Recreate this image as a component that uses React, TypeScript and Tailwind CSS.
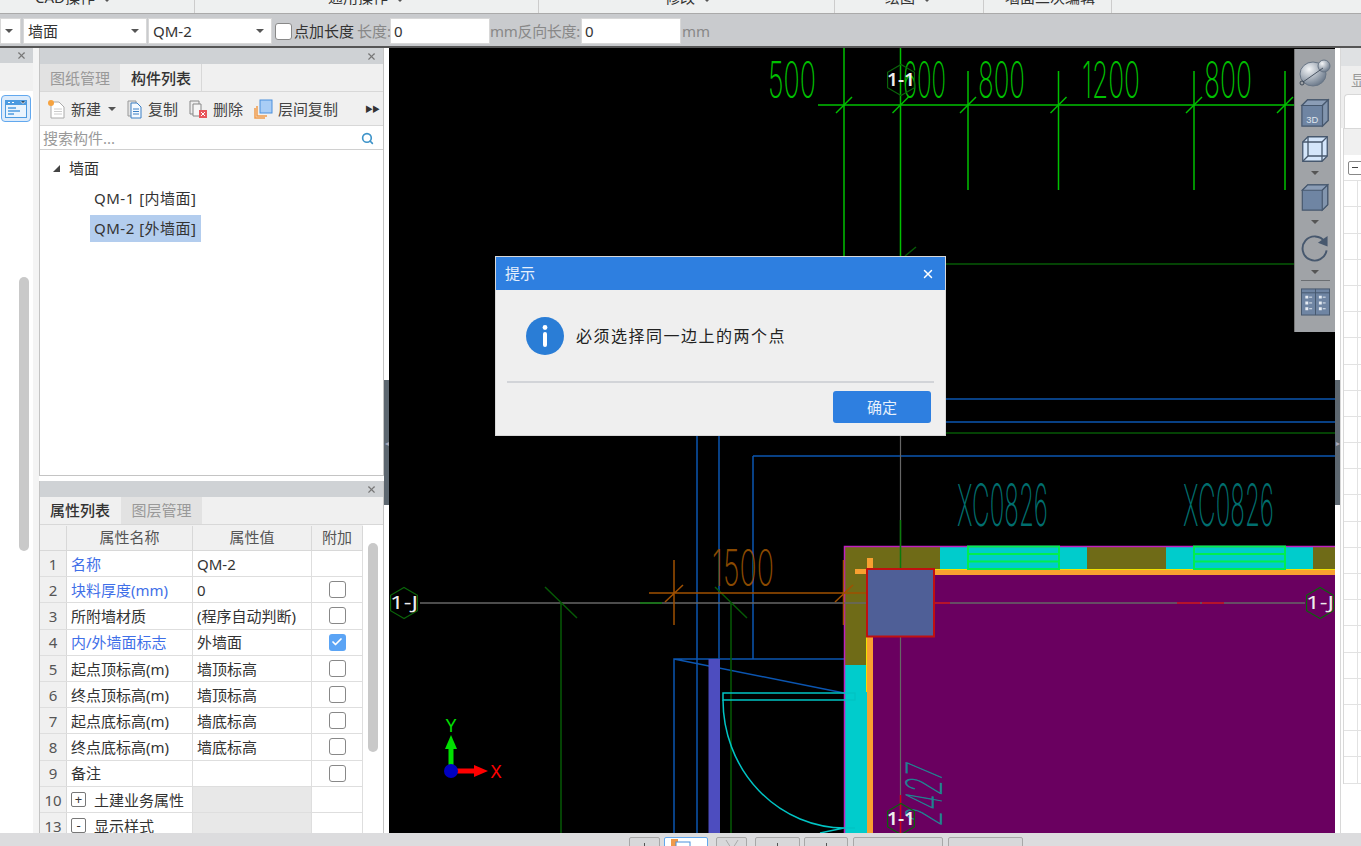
import type { ReactNode } from 'react';
import { Check, Search, X } from 'lucide-react';

type PropRow = {
	no: number;
	name: string;
	value: string;
	blue?: boolean;
	box?: 'on' | 'off';
	group?: '+' | '-';
};

const rows: PropRow[] = [
	{ no: 1, name: '名称', value: 'QM-2', blue: true },
	{ no: 2, name: '块料厚度(mm)', value: '0', blue: true, box: 'off' },
	{ no: 3, name: '所附墙材质', value: '(程序自动判断)', box: 'off' },
	{ no: 4, name: '内/外墙面标志', value: '外墙面', blue: true, box: 'on' },
	{ no: 5, name: '起点顶标高(m)', value: '墙顶标高', box: 'off' },
	{ no: 6, name: '终点顶标高(m)', value: '墙顶标高', box: 'off' },
	{ no: 7, name: '起点底标高(m)', value: '墙底标高', box: 'off' },
	{ no: 8, name: '终点底标高(m)', value: '墙底标高', box: 'off' },
	{ no: 9, name: '备注', value: '', box: 'off' },
	{ no: 10, name: '土建业务属性', value: '', group: '+' },
	{ no: 13, name: '显示样式', value: '', group: '-' },
];

const Caret = () => (
	<span className="block h-0 w-0 shrink-0 border-x-[4px] border-t-[4px] border-x-transparent border-t-[#555]" />
);

const Select = ({ label, width }: { label: string; width: string }) => (
	<div className={`flex h-[26px] shrink-0 items-center justify-between border border-[#d8d8d8] bg-white pl-[4px] pr-[7px] text-[15px] text-[#333] ${width}`}>
		<span>{label}</span>
		<Caret />
	</div>
);

const NewIcon = () => (
	<svg width="20" height="20" viewBox="0 0 20 20">
		<path d="M4 3h8l5 5v11H4z" fill="#fff" stroke="#aaa" />
		<path d="M7 10h8M7 12.5h8M7 15h8" stroke="#ccc" />
		<circle cx="4" cy="4" r="3" fill="#f6a340" />
	</svg>
);

const CopyIcon = () => (
	<svg width="18" height="20" viewBox="0 0 18 20">
		<path d="M2 2h8v15H2z" fill="#e4e4e4" stroke="#999" />
		<path d="M5 4h6l4 4v11H5z" fill="#f4f9ff" stroke="#3b7fc4" />
		<path d="M7 10h6M7 12.5h6M7 15h6" stroke="#3b7fc4" />
	</svg>
);

const DeleteIcon = () => (
	<svg width="20" height="20" viewBox="0 0 20 20">
		<path d="M1 2h9v13H1z" fill="#eee" stroke="#888" />
		<path d="M4 5h8v12H4z" fill="#f6f6f6" stroke="#888" />
		<rect x="10" y="11" width="8" height="8" fill="#e8555a" />
		<path d="M12 13l4 4M16 13l-4 4" stroke="#fff" />
	</svg>
);

const LayerCopyIcon = () => (
	<svg width="20" height="20" viewBox="0 0 20 20">
		<path d="M1 9v10h10" fill="none" stroke="#f09a4a" strokeWidth="1.5" />
		<path d="M3 7v10h10" fill="none" stroke="#f09a4a" strokeWidth="1.5" />
		<rect x="6" y="1" width="12" height="13" fill="#a9cdf5" stroke="#4a8fdc" />
	</svg>
);

const LeftStrip = () => (
	<div className="flex w-[33px] shrink-0 flex-col bg-white">
		<div className="flex h-[15px] items-center justify-end bg-[#cfd2d5] pr-[6px]">
			<X size={11} strokeWidth={2.5} className="text-[#777]" />
		</div>
		<div className="h-[28px] bg-[#f0f0f0]" />
		<div className="ml-[1px] mt-[4px] flex h-[27px] w-[30px] items-center justify-center rounded-[4px] border border-[#62a8ee] bg-[#dcebfb]">
			<svg width="22" height="18" viewBox="0 0 22 18">
				<rect width="22" height="18" fill="#4d9be0" />
				<rect x="1" y="5" width="20" height="12" fill="#eaf4fd" />
				<path d="M3 8h8M3 11h12M3 14h6" stroke="#4d9be0" strokeWidth="1.5" />
				<path d="M3 2.5h2M7 2.5h2M16 1.5l2 2 2-2" stroke="#fff" />
			</svg>
		</div>
		<div className="ml-[19px] mt-[155px] h-[274px] w-[10px] rounded-full bg-[#c9c9c9]" />
	</div>
);

const PanelHeader = () => (
	<div className="flex h-[16px] shrink-0 items-center justify-end bg-[#cfd2d5] pr-[6px]">
		<X size={11} strokeWidth={2.5} className="text-[#777]" />
	</div>
);

const ToolButton = ({ icon, label }: { icon: ReactNode; label: string }) => (
	<div className="flex items-center gap-[4px] text-[15px] text-[#444]">
		{icon}
		<span className="pt-[2px]">{label}</span>
	</div>
);

const ComponentPanel = () => (
	<div className="flex h-[428px] shrink-0 flex-col border-x border-b border-[#c4c4c4] bg-white">
		<PanelHeader />
		<div className="flex h-[28px] shrink-0 items-end border-b border-[#d8d8d8] bg-[#f0f0f0]">
			<div className="flex h-[27px] w-[80px] items-center justify-center bg-[#e2e2e2] pt-[1px] text-[15px] text-[#999]">图纸管理</div>
			<div className="ml-[1px] flex h-[27px] w-[81px] items-center justify-center border-r border-[#d8d8d8] bg-[#f0f0f0] pt-[1px] text-[15px] font-medium text-[#333]">构件列表</div>
		</div>
		<div className="flex h-[34px] shrink-0 items-center border-b border-[#d8d8d8] bg-[#f0f0f0] pl-[7px] pr-[4px]">
			<ToolButton icon={<NewIcon />} label="新建" />
			<span className="ml-[7px] mr-[10px]"><Caret /></span>
			<ToolButton icon={<CopyIcon />} label="复制" />
			<span className="w-[11px]" />
			<ToolButton icon={<DeleteIcon />} label="删除" />
			<span className="w-[11px]" />
			<ToolButton icon={<LayerCopyIcon />} label="层间复制" />
			<span className="ml-auto text-[8px] tracking-[-1px] text-[#333]">▶▶</span>
		</div>
		<div className="flex h-[24px] shrink-0 items-center justify-between border-b border-[#d0d0d0] pl-[3px] pr-[9px] pt-[2px] text-[15px] text-[#999]">
			<span>搜索构件...</span>
			<Search size={13} strokeWidth={3} className="text-[#3d93c9]" />
		</div>
		<div className="flex flex-col pt-[3px] text-[15px] tracking-[0.5px] text-[#333]">
			<div className="flex h-[30px] items-center pl-[13px]">
				<span className="h-0 w-0 border-b-[7px] border-l-[7px] border-b-[#444] border-l-transparent" />
				<span className="ml-[9px] tracking-normal">墙面</span>
			</div>
			<div className="flex h-[30px] items-center pl-[54px]">QM-1 [内墙面]</div>
			<div className="ml-[50px] mt-[2px] flex h-[27px] w-[111px] items-center bg-[#b3cdee] pl-[4px]">QM-2 [外墙面]</div>
		</div>
	</div>
);

const CheckBox = ({ on }: { on: boolean }) =>
	on ? (
		<span className="flex h-[17px] w-[17px] items-center justify-center rounded-[3px] bg-[#5ba4f5]">
			<Check size={12} strokeWidth={3.5} className="text-white" />
		</span>
	) : (
		<span className="h-[17px] w-[17px] rounded-[3px] border border-[#888] bg-white" />
	);

const PropertyPanel = () => (
	<div className="mt-[5px] flex min-h-0 flex-1 flex-col overflow-hidden border-x border-[#c4c4c4] bg-white">
		<PanelHeader />
		<div className="flex h-[28px] shrink-0 items-end border-b border-[#d8d8d8] bg-[#f0f0f0]">
			<div className="flex h-[27px] w-[80px] items-center justify-center bg-[#f0f0f0] text-[15px] font-medium text-[#333]">属性列表</div>
			<div className="ml-[1px] flex h-[27px] w-[81px] items-center justify-center bg-[#e2e2e2] text-[15px] text-[#999]">图层管理</div>
		</div>
		<div className="flex min-h-0 flex-1">
			<div className="flex w-[323px] flex-col text-[15px] text-[#333]">
				<div className="flex h-[26px] shrink-0 border-b border-[#d8d8d8] bg-[#f0f0f0] pt-[1px] text-center text-[#555]">
					<div className="w-[27px] border-r border-[#d8d8d8]" />
					<div className="w-[126px] border-r border-[#d8d8d8]">属性名称</div>
					<div className="w-[119px] border-r border-[#d8d8d8]">属性值</div>
					<div className="w-[51px] border-r border-[#d8d8d8]">附加</div>
				</div>
				{rows.map((r) => (
					<div key={r.no} className="flex h-[26.2px] shrink-0 items-stretch border-b border-[#dedede]">
						<div className="flex w-[27px] items-center justify-center border-r border-[#d8d8d8] bg-[#f0f0f0] pt-[1px] text-[#555]">{r.no}</div>
						<div className={`flex w-[126px] items-center whitespace-nowrap border-r border-[#dedede] pl-[4px] pt-[1px] ${r.blue ? 'text-[#3f6fe8]' : ''}`}>
							{r.group ? (
								<>
									<span className="mr-[8px] flex h-[15px] w-[15px] items-center justify-center rounded-[2px] border border-[#777] text-[13px] leading-none">{r.group}</span>
									{r.name}
								</>
							) : (
								r.name
							)}
						</div>
						<div className={`flex w-[119px] items-center whitespace-nowrap border-r border-[#dedede] pl-[4px] pt-[1px] ${r.group ? 'bg-[#e8e8e8]' : ''}`}>{r.value}</div>
						<div className="flex w-[51px] items-center justify-center border-r border-[#dedede]">
							{r.box ? <CheckBox on={r.box === 'on'} /> : null}
						</div>
					</div>
				))}
			</div>
			<div className="ml-[5px] mt-[18px] h-[209px] w-[10px] rounded-full bg-[#c9c9c9]" />
		</div>
	</div>
);

const Splitter = ({ width, arrow }: { width: string; arrow: string }) => (
	<div className={`flex shrink-0 flex-col bg-white pt-[332px] ${width}`}>
		<div className="flex h-[125px] items-center justify-center bg-[#5d6770] text-[8px] text-[#aab]">{arrow}</div>
	</div>
);

const Cad = ({ x, y, w, size, fill, children }: { x: number; y: number; w: number; size: number; fill: string; children: string }) => (
	<text x={x} y={y} fontFamily="Inter, sans-serif" fontWeight={200} fontSize={size} fill={fill} textLength={w} lengthAdjust="spacingAndGlyphs">
		{children}
	</text>
);

const hexPoints = (cx: number, cy: number, r: number) =>
	[0, 1, 2, 3, 4, 5]
		.map((i) => {
			const a = (Math.PI / 3) * i + Math.PI / 2;
			return `${cx + r * Math.cos(a)},${cy + r * Math.sin(a)}`;
		})
		.join(' ');

const Axis = ({ cx, cy, label, w, weight }: { cx: number; cy: number; label: string; w: number; weight: number }) => (
	<g>
		<polygon points={hexPoints(cx, cy, 15.5)} fill="none" stroke="#0a650a" strokeWidth="1.2" />
		<text x={cx} y={cy + 6} textAnchor="middle" fontFamily="Noto Sans, sans-serif" fontSize="18" fontWeight={weight} fill="#eee" textLength={w} lengthAdjust="spacingAndGlyphs">
			{label}
		</text>
	</g>
);

const greenX = [844, 900.5, 968, 1058.5, 1194, 1285];
const windows = [968, 1194];

// drawing on the canvas, in page coordinates
const Drawing = () => (
	<svg className="h-full w-full" viewBox="389 48 946 785">
		{/* blue lines */}
		<g stroke="#0b55b0" strokeWidth="1.5" fill="none">
			<path d="M753 399H1335M753 422H1335M753 456H1335M753 456V659M697 430V833M719 430V659" />
			<path d="M674 833V659H844M674 659L844 693" />
		</g>
		<rect x="708.5" y="659" width="11.5" height="174" fill="#4d4dbf" />
		<path d="M753 433H1335" stroke="#065906" strokeWidth="1.5" />

		{/* upper dimensions */}
		<g stroke="#00c000" strokeWidth="1.5" fill="none">
			<path d="M844 48V260M900.5 48V260M968 71V190M1058.5 71V190M1194 71V190M1285 71V190M818 105H1294" />
			{greenX.map((x) => (
				<path key={x} d={`M${x - 8} ${113}L${x + 8} ${97}`} />
			))}
		</g>
		<Cad x={768} y={98} w={48} size={50} fill="#00c000">500</Cad>
		<Cad x={903} y={98} w={43} size={50} fill="#00c000">600</Cad>
		<Cad x={978} y={98} w={47} size={50} fill="#00c000">800</Cad>
		<Cad x={1082} y={98} w={58} size={50} fill="#00c000">1200</Cad>
		<Cad x={1204} y={98} w={48} size={50} fill="#00c000">800</Cad>
		<path d="M946 264H1294M905 256L916 247" stroke="#065906" strokeWidth="1.5" />

		{/* wall and room fills */}
		<rect x="845" y="547" width="490" height="286" fill="#6a0060" />
		<rect x="845" y="547" width="22" height="118" fill="#6f6b17" />
		<rect x="845" y="665" width="22" height="168" fill="#00cccc" />
		<rect x="845" y="547" width="95" height="22" fill="#6f6b17" />
		<rect x="940" y="547" width="147" height="22" fill="#00cccc" />
		<rect x="1087" y="547" width="79" height="22" fill="#6f6b17" />
		<rect x="1166" y="547" width="147" height="22" fill="#00cccc" />
		<rect x="1313" y="547" width="22" height="22" fill="#6f6b17" />
		<rect x="867" y="569" width="468" height="6" fill="#f8a030" />
		<path d="M867 569.5H1335" stroke="#f0e000" />
		<rect x="867" y="636" width="6" height="197" fill="#f8a030" />
		<path d="M866.5 636V692" stroke="#f0e000" />
		<path d="M867 558h6v11h-6zM855 569h12v5h-12z" fill="#f8a030" />
		<path d="M844.5 833V546.5H1335" fill="none" stroke="#c020c0" strokeWidth="1.5" />
		{windows.map((x) => (
			<g key={x} fill="none" stroke="#00ee50" strokeWidth="2">
				<rect x={x} y="546.5" width="91" height="22.5" />
				<path d={`M${x} 554H${x + 91}M${x} 561.5H${x + 91}`} />
			</g>
		))}

		{/* axis lines */}
		<path d="M420 603H1305" stroke="#666" strokeWidth="1.5" />
		<path d="M640 603H662" stroke="#0b7a0b" strokeWidth="1.5" />
		<path d="M900.5 436V833" stroke="#666" strokeWidth="1.2" />
		<path d="M900.5 520V569" stroke="#0b7a0b" strokeWidth="1.5" />
		<path d="M934 603H950M1177 603H1200M1202 603H1224M900.5 795V833" stroke="#d00018" strokeWidth="1.5" />
		<path d="M545 587L577 618M561 603V833M715 587L747 618M731 603V833" stroke="#065906" strokeWidth="1.5" fill="none" />

		{/* orange dimension */}
		<g stroke="#a05000" strokeWidth="1.5" fill="none">
			<path d="M649 593H869M674 560V625M665 602L683 585M843.5 560V625M835 602L853 585" />
		</g>
		<Cad x={712} y={586} w={62} size={50} fill="#8a4a00">1500</Cad>

		{/* column */}
		<rect x="867" y="569" width="67" height="67.5" fill="#4f5f97" stroke="#c01010" strokeWidth="2" />

		{/* door */}
		<g stroke="#00c4c4" fill="none" strokeWidth="1.5">
			<path d="M723 693H855V700H723Z" />
			<path d="M723 700A122 128 0 0 0 845 828H855M820 833L844 828" />
		</g>

		<Cad x={957} y={526} w={91} size={58} fill="#006e6e">XC0826</Cad>
		<Cad x={1183} y={526} w={91} size={58} fill="#006e6e">XC0826</Cad>
		<g transform="translate(942 827) rotate(-90) skewX(-10)">
			<Cad x={0} y={0} w={60} size={50} fill="#1f8090">2427</Cad>
		</g>

		<Axis cx={901} cy={80} label="1-1" w={28} weight={600} />
		<Axis cx={901} cy={819} label="1-1" w={28} weight={600} />
		<Axis cx={404} cy={603} label="1-J" w={28} weight={400} />
		<Axis cx={1320} cy={603} label="1-J" w={28} weight={400} />

		{/* origin marker */}
		<path d="M451 771V748" stroke="#00e000" strokeWidth="5" />
		<polygon points="451,735 445,749 457,749" fill="#00e000" />
		<path d="M451 771H475" stroke="#ff0000" strokeWidth="5" />
		<polygon points="488,771 474,765 474,777" fill="#ff0000" />
		<circle cx="451" cy="771" r="7" fill="#0000c0" />
		<text x="451" y="732" textAnchor="middle" fontFamily="Inter, sans-serif" fontSize="17" fill="#00e000">Y</text>
		<text x="496" y="778" textAnchor="middle" fontFamily="Inter, sans-serif" fontSize="17" fill="#ff0000">X</text>
	</svg>
);

const CubeFaces = ({ fill }: { fill: string }) => (
	<>
		<path d="M2 8l6-6h22v22l-6 6H2z" fill={fill} stroke="#47586e" strokeWidth="1.3" />
		<path d="M2 8l6-6h22l-6 6z" fill="#8b9db6" stroke="#47586e" strokeWidth="1.3" />
		<path d="M24 8l6-6v22l-6 6z" fill="#8295ae" stroke="#47586e" strokeWidth="1.3" />
	</>
);

const ViewTool = () => (
	<div className="absolute right-0 top-[1px] flex h-[283px] w-[41px] flex-col items-center border-l border-[#777] bg-[#a0a3a7] pt-[6px]">
		<svg width="32" height="33" viewBox="0 0 32 33" className="shrink-0">
			<defs>
				<radialGradient id="ball" cx="0.35" cy="0.3" r="0.8">
					<stop offset="0" stopColor="#f4f6f8" />
					<stop offset="1" stopColor="#5e6d80" />
				</radialGradient>
			</defs>
			<ellipse cx="14" cy="19" rx="13" ry="12" fill="url(#ball)" stroke="#687585" />
			<circle cx="25" cy="11" r="6" fill="url(#ball)" stroke="#687585" />
			<path d="M4 27L24 13" stroke="#4a5564" />
			<circle cx="3" cy="28" r="2" fill="none" stroke="#3e4a58" />
		</svg>
		<svg width="30" height="30" viewBox="0 0 32 32" className="mt-[10px] shrink-0">
			<CubeFaces fill="#6f85a3" />
			<text x="13" y="27" textAnchor="middle" fontFamily="Liberation Sans, sans-serif" fontSize="10" fill="#dfe6ee">3D</text>
		</svg>
		<svg width="30" height="28" viewBox="0 0 32 32" className="mt-[7px] shrink-0">
			<path d="M2 8l6-6h22v22l-6 6H2z" fill="#d4e6fb" stroke="#47586e" strokeWidth="1.5" />
			<path d="M2 8h22v22M24 8l6-6M8 2v22H30M8 24l-6 6" fill="none" stroke="#47586e" strokeWidth="1.5" />
		</svg>
		<span className="mt-[8px]"><Caret /></span>
		<svg width="30" height="29" viewBox="0 0 32 32" className="mt-[8px] shrink-0">
			<CubeFaces fill="#6f85a3" />
		</svg>
		<span className="mt-[8px]"><Caret /></span>
		<svg width="30" height="29" viewBox="0 0 30 30" className="mt-[9px] shrink-0">
			<path d="M25 9A12.5 12.5 0 1 0 27 18" fill="none" stroke="#47586e" strokeWidth="2" />
			<polygon points="28,3 28,14 18,10" fill="#47586e" />
		</svg>
		<span className="mt-[8px]"><Caret /></span>
		<div className="mt-[6px] h-[1px] w-[29px] shrink-0 bg-[#6b6e72]" />
		<svg width="31" height="29" viewBox="0 0 31 30" className="mt-[6px] shrink-0">
			<rect x="1" y="2" width="29" height="27" fill="#6f85a3" stroke="#47586e" />
			<path d="M15.5 2V29M1 6H30" stroke="#47586e" />
			<path d="M5 9h3v3H5zM5 15h3v3H5zM5 21h3v3H5zM19 9h3v3h-3zM19 15h3v3h-3zM19 21h3v3h-3z" fill="#e6ecf3" />
			<path d="M9 10.5h3M9 16.5h3M9 22.5h3M23 10.5h3M23 16.5h3M23 22.5h3" stroke="#e6ecf3" />
		</svg>
	</div>
);

const Dialog = () => (
	<div className="absolute left-[106px] top-[208px] flex h-[180px] w-[451px] flex-col border border-[#d8d8d8] bg-[#efefef]">
		<div className="flex h-[33px] shrink-0 items-center justify-between bg-[#2e7fe0] pl-[9px] pr-[10px] text-[15px] text-[#e6f0fc]">
			<span>提示</span>
			<X size={14} strokeWidth={2.5} className="text-white" />
		</div>
		<div className="mx-[11px] flex h-[93px] shrink-0 items-center border-b-2 border-[#d2d4d8] pl-[19px]">
			<svg width="38" height="38" viewBox="0 0 38 38" className="shrink-0">
				<circle cx="19" cy="19" r="19" fill="#2a7dd6" />
				<circle cx="19" cy="10.5" r="2.4" fill="#fff" />
				<rect x="17" y="15" width="4" height="15" rx="2" fill="#fff" />
			</svg>
			<span className="ml-[12px] text-[16px] tracking-[1.5px] text-[#222]">必须选择同一边上的两个点</span>
		</div>
		<div className="mr-[14px] mt-[8px] flex h-[32px] w-[98px] items-center justify-center self-end rounded-[3px] bg-[#2e7fe0] text-[15px] text-[#e6f0fc]">确定</div>
	</div>
);

const gridBoxes = [1, 4, 8, 17];

const RightPanel = () => (
	<div className="flex flex-1 flex-col overflow-hidden border-l border-[#d8d8d8] bg-white">
		<div className="h-[18px] shrink-0 bg-[#dfe1e3]" />
		<div className="flex h-[28px] shrink-0 items-center bg-[#eeeeee] pl-[10px] text-[15px] text-[#999]">显</div>
		<div className="flex h-[34px] shrink-0 items-end bg-[#eeeeee]">
			<div className="ml-[3px] h-[34px] flex-1 rounded-tl-[4px] border-l border-t border-[#d8d8d8] bg-white" />
		</div>
		<div className="ml-[2px] flex flex-col border-l border-t border-[#d8d8d8]">
			<div className="h-[26px] bg-[#f0f0f0]" />
			{[...Array(24)].map((_, i) => (
				<div key={i} className="flex h-[26.2px] items-center border-b border-[#e2e2e2] pl-[13px]">
					{i === 0 ? (
						<span className="-ml-[9px] flex h-[14px] w-[20px] shrink-0 items-center rounded-[2px] border border-[#888] bg-white pl-[3px]">
							<span className="h-[1px] w-[6px] bg-[#444]" />
						</span>
					) : (
						<div className="flex h-full items-center border-l border-[#e2e2e2] pl-[3px]">
							{gridBoxes.includes(i) ? <span className="h-[14px] w-[10px] shrink-0 border border-[#999] bg-[#eee]" /> : null}
						</div>
					)}
				</div>
			))}
		</div>
	</div>
);

const BottomButton = ({ width, active, children }: { width: string; active?: boolean; children?: ReactNode }) => (
	<div className={`flex h-[20px] shrink-0 justify-center rounded-t-[2px] border ${active ? 'border-[#62a8ee] bg-white' : 'border-[#a8a8a8] bg-[#d8d8da]'} ${width}`}>
		{children}
	</div>
);

const Stub = () => <span className="mt-[5px] h-[6px] w-[1px] bg-[#555]" />;

const RibbonGroup = ({ label, width, left }: { label: string; width: string; left: string }) => (
	<div className={`flex h-full shrink-0 items-start border-r border-[#ccc] ${width} ${left}`}>
		<span className="-mt-[13px] whitespace-nowrap">{label}</span>
		<span className="ml-[8px] -mt-[2px]"><Caret /></span>
	</div>
);

const App = () => (
	<div className="flex h-[846px] w-[1361px] flex-col overflow-hidden bg-white font-['Noto_Sans','Noto_Sans_CJK_SC',sans-serif]">
		<div className="flex h-[14px] shrink-0 overflow-hidden border-b border-[#aaa] bg-[#eef0f0] text-[15px] leading-[20px] text-[#333]">
			<RibbonGroup label="CAD操作" width="w-[195px]" left="pl-[35px]" />
			<RibbonGroup label="通用操作" width="w-[344px]" left="pl-[133px]" />
			<RibbonGroup label="修改" width="w-[296px]" left="pl-[126px]" />
			<RibbonGroup label="绘图" width="w-[149px]" left="pl-[50px]" />
			<div className="flex h-full w-[128px] shrink-0 items-start border-r border-[#ccc] pl-[21px]">
				<span className="-mt-[13px] whitespace-nowrap">墙面二次编辑</span>
			</div>
		</div>
		<div className="flex h-[34px] shrink-0 items-center border-b-2 border-[#555] bg-[#c9cbce] pt-[2px] text-[15px] text-[#333]">
			<Select label="" width="w-[21px]" />
			<span className="ml-[2px]"><Select label="墙面" width="w-[124px]" /></span>
			<span className="ml-[1px]"><Select label="QM-2" width="w-[124px]" /></span>
			<span className="ml-[3px] h-[17px] w-[17px] shrink-0 rounded-[3px] border border-[#888] bg-white" />
			<span className="ml-[2px] w-[61px] shrink-0 whitespace-nowrap">点加长度</span>
			<span className="ml-[2px] w-[33px] shrink-0 whitespace-nowrap text-[#888]">长度:</span>
			<div className="flex h-[26px] w-[100px] shrink-0 items-center border border-[#d8d8d8] bg-white pl-[3px]">0</div>
			<span className="w-[91px] shrink-0 whitespace-nowrap tracking-[-0.3px] text-[#888]">mm反向长度:</span>
			<div className="flex h-[26px] w-[100px] shrink-0 items-center border border-[#d8d8d8] bg-white pl-[3px]">0</div>
			<span className="ml-[1px] text-[#888]">mm</span>
		</div>
		<div className="flex min-h-0 flex-1">
			<LeftStrip />
			<div className="w-[6px] shrink-0 bg-[#f4f4f4]" />
			<div className="flex w-[345px] shrink-0 flex-col">
				<ComponentPanel />
				<PropertyPanel />
			</div>
			<Splitter width="w-[5px]" arrow="◂" />
			<div className="relative w-[946px] shrink-0 overflow-hidden bg-black">
				<Drawing />
				<Dialog />
				<ViewTool />
			</div>
			<Splitter width="w-[5px]" arrow="▸" />
			<RightPanel />
		</div>
		<div className="flex h-[13px] shrink-0 items-start overflow-hidden bg-[#dcdcde] pt-[4px]">
			<div className="ml-[629px]"><BottomButton width="w-[31px]"><Stub /></BottomButton></div>
			<div className="ml-[4px]">
				<BottomButton width="w-[44px]" active>
					<svg width="30" height="10" viewBox="0 0 30 10" className="mt-[1px]">
						<rect x="0" y="0" width="7" height="10" fill="#f09a4a" />
						<rect x="5" y="3" width="14" height="7" fill="#fff" stroke="#4a8fdc" />
					</svg>
				</BottomButton>
			</div>
			<div className="ml-[8px]">
				<BottomButton width="w-[31px]">
					<svg width="20" height="10" viewBox="0 0 20 10" className="mt-[1px]">
						<path d="M4 1l5 8M16 1l-5 8" stroke="#aaa" />
					</svg>
				</BottomButton>
			</div>
			<div className="ml-[8px]"><BottomButton width="w-[45px]"><Stub /></BottomButton></div>
			<div className="ml-[4px]"><BottomButton width="w-[44px]"><Stub /></BottomButton></div>
			<div className="ml-[5px]"><BottomButton width="w-[90px]" /></div>
			<div className="ml-[5px]"><BottomButton width="w-[75px]" /></div>
		</div>
	</div>
);

export default App;
